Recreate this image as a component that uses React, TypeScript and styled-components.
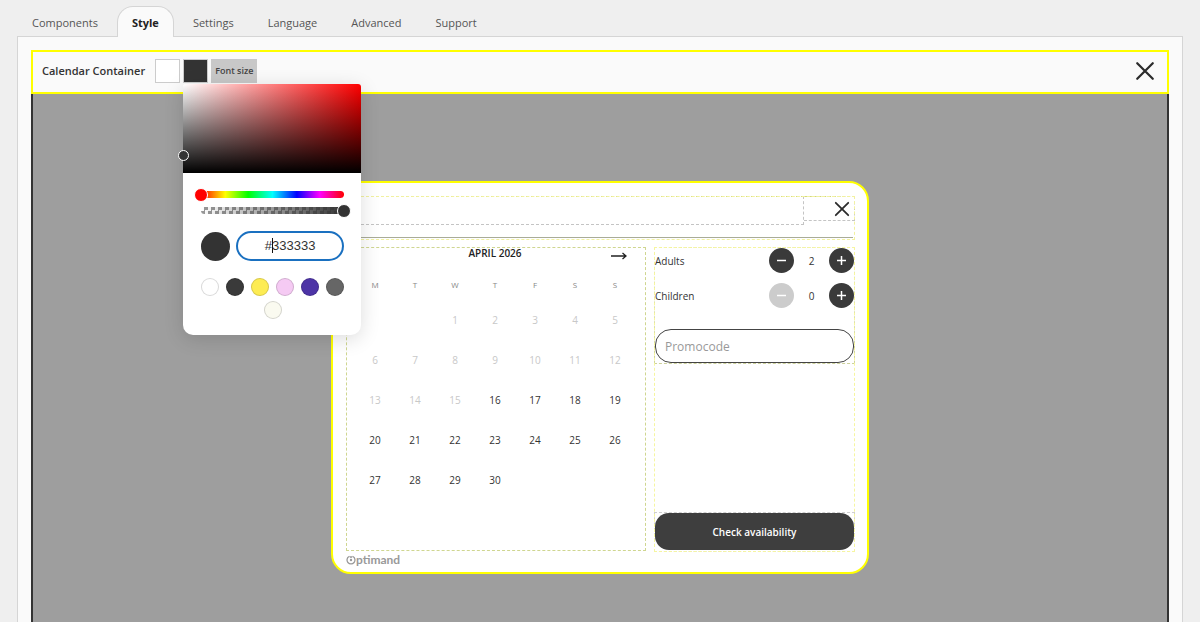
import React from "react";
import styled, { createGlobalStyle, css } from "styled-components";

const GlobalStyle = createGlobalStyle`
  *, *::before, *::after { box-sizing: border-box; }
  body {
    margin: 0;
    background: #efefef;
    color: #333;
    font-family: "Open Sans", "Noto Sans", sans-serif;
    font-size: 11px;
    line-height: 16px;
  }
  button, input { font: inherit; color: inherit; margin: 0; }
  button { padding: 0; border: 0; background: none; cursor: pointer; }
`;

const Page = styled.div`
  display: flex;
  flex-direction: column;
  min-height: 100vh;
  padding: 6px 17px 0;
`;

const Tabs = styled.nav`
  display: flex;
  gap: 4px;
  position: relative;
  z-index: 1;
  margin-bottom: -1px;
`;

const Tab = styled.a<{ $active?: boolean }>`
  height: 31px;
  padding: 8px 14px 0;
  border: 1px solid transparent;
  border-bottom: 0;
  border-radius: 16px 16px 0 0;
  color: #555;
  font-size: 11px;
  text-decoration: none;
  ${(p) =>
    p.$active &&
    css`
      background: #fafafa;
      border-color: #d5d5d5;
      color: #222;
      font-weight: 700;
    `}
`;

const Panel = styled.main`
  flex: 1;
  display: flex;
  flex-direction: column;
  padding: 13px 13px 0;
  border: 1px solid #d5d5d5;
  border-bottom: 0;
  background: #fafafa;
`;

const Toolbar = styled.div`
  display: flex;
  align-items: center;
  height: 44px;
  padding: 0 12px 2px 9px;
  border: 2px solid #ff0;
`;

const ToolbarTitle = styled.h1`
  margin: 0 10px 0 0;
  font-size: 11px;
  font-weight: 600;
`;

const SwatchSlot = styled.div`
  position: relative;
  display: flex;
  margin-right: 3px;
`;

const Swatch = styled.button<{ $color: string }>`
  width: 25px;
  height: 24px;
  border: 1px solid #ccc;
  background: ${(p) => p.$color};
`;

const FontSizeButton = styled.button`
  height: 24px;
  padding: 0 4px;
  background: #c8c8c8;
  color: #444;
  font-size: 9px;
  font-weight: 600;
`;

const IconButton = styled.button`
  display: flex;
  margin-left: auto;
`;

const Stage = styled.section`
  flex: 1;
  padding: 87px 16px 48px;
  border: solid #333;
  border-width: 0 2px;
  background: #9e9e9e;
`;

const Modal = styled.div`
  width: 538px;
  max-width: 100%;
  margin: 0 auto;
  padding: 13px 12px 4px 13px;
  border: 2px solid #ff0;
  border-radius: 20px;
  background: #fff;
`;

const ModalHeader = styled.header`
  display: flex;
  align-items: flex-start;
  height: 44px;
  margin-bottom: 7px;
  outline: 1px dashed #f2f2a0;
  outline-offset: -1px;
  background: linear-gradient(#a9ac98, #a9ac98) 0 41px / 507px 1px no-repeat;
`;

const HeaderTitle = styled.div`
  flex: 1;
  height: 29px;
  border: 1px dashed #c4c4c4;
  border-top-color: #d2d87c;
`;

const HeaderClose = styled.div`
  display: flex;
  align-items: center;
  width: 51px;
  height: 25px;
  padding-right: 4px;
  border: 1px dashed #c4c4c4;
  border-left: 0;
  border-top-color: #d2d87c;
`;

const ModalBody = styled.div`
  display: grid;
  grid-template-columns: 300px 1fr;
  gap: 8px;
`;

const Calendar = styled.section`
  height: 304px;
  padding: 0 10px 0 8px;
  border: 1px dashed #cfd690;
`;

const MonthBar = styled.div`
  display: grid;
  grid-template-columns: 1fr auto 1fr;
  height: 12px;
  margin-bottom: 10px;
  line-height: 10px;
`;

const Month = styled.h2`
  grid-column: 2;
  margin: 0;
  color: #222;
  font-size: 10px;
  font-weight: 600;
`;

const NextButton = styled.button`
  display: flex;
  align-items: flex-end;
  justify-self: end;
  margin-right: 8px;
`;

const Days = styled.table`
  width: 100%;
  table-layout: fixed;
  border-collapse: collapse;
  th {
    height: 30px;
    padding: 0;
    color: #888;
    font-size: 8px;
    font-weight: 400;
  }
  td {
    height: 40px;
    padding: 0;
    text-align: center;
  }
`;

const Day = styled.button`
  width: 32px;
  height: 32px;
  color: #333;
  font-size: 10px;
  font-weight: 500;
  &:disabled {
    color: #c8c8c8;
    font-weight: 400;
  }
`;

const Side = styled.section`
  display: flex;
  flex-direction: column;
  justify-content: space-between;
  height: 305px;
  outline: 1px dashed #f6f6a0;
  outline-offset: -1px;
`;

const Options = styled.div`
  outline: 1px dashed #cdd29c;
  outline-offset: -1px;
  padding: 1px;
`;

const GuestRow = styled.div`
  display: flex;
  align-items: center;
  height: 25px;
  margin-bottom: 10px;
`;

const GuestLabel = styled.span`
  flex: 1;
  font-size: 10px;
`;

const GuestCount = styled.output`
  width: 35px;
  text-align: center;
  font-size: 10px;
`;

const RoundButton = styled.button`
  display: flex;
  align-items: center;
  justify-content: center;
  width: 25px;
  height: 25px;
  border-radius: 50%;
  background: #3a3a3a;
  color: #fff;
  &:disabled {
    background: #ccc;
    color: #fff;
  }
`;

const Promo = styled.input`
  display: block;
  width: 100%;
  height: 34px;
  margin-top: 21px;
  padding: 0 9px;
  border: 1px solid #444;
  border-radius: 16px;
  background: #fff;
  font-size: 12px;
  &::placeholder { color: #999; opacity: 1; }
`;

const SubmitArea = styled.div`
  padding: 1px 1px 2px;
  outline: 1px dashed #cfcfcf;
  outline-offset: -1px;
`;

const Submit = styled.button`
  display: block;
  width: 100%;
  height: 37px;
  border-radius: 14px;
  background: #3e3e3e;
  color: #fff;
  font-size: 10px;
  font-weight: 600;
`;

const Brand = styled.footer`
  display: flex;
  align-items: center;
  height: 16px;
  color: #999;
  font-family: Lato, sans-serif;
  font-size: 12px;
  font-weight: 700;
`;

const Picker = styled.div`
  position: absolute;
  z-index: 5;
  top: 25px;
  left: 0;
  width: 178px;
  border-radius: 3px 3px 10px 10px;
  background: #fff;
  box-shadow: 0 4px 20px rgba(0, 0, 0, 0.14);
`;

const Saturation = styled.div`
  position: relative;
  height: 89px;
  border-radius: 3px 3px 0 0;
  background: linear-gradient(transparent, #000), linear-gradient(to right, #fff, #f00);
`;

const Handle = styled.span`
  position: absolute;
  top: 80%;
  left: 0;
  width: 11px;
  height: 11px;
  margin: -5px;
  border: 1px solid #fff;
  border-radius: 50%;
  background: #333;
`;

const PickerBody = styled.div`
  padding: 18px 17px 16px 18px;
`;

const Track = styled.div<{ $kind: "hue" | "alpha" }>`
  display: flex;
  align-items: center;
  height: 7px;
  margin-bottom: 9px;
  border-radius: 4px;
  background: ${(p) =>
    p.$kind === "hue"
      ? "linear-gradient(to right, #f00, #ff0 17%, #0f0 33%, #0ff 50%, #00f 67%, #f0f 83%, #f00)"
      : "linear-gradient(to right, transparent, #333), repeating-conic-gradient(#999 0 25%, #fff 0 50%) 0 0 / 7px 7px"};
`;

const Range = styled.input<{ $thumb: string }>`
  appearance: none;
  flex: 1;
  min-width: 0;
  height: 13px;
  margin: 0 -7px;
  background: transparent;
  &::-webkit-slider-thumb {
    appearance: none;
    width: 14px;
    height: 14px;
    border: 1px solid #fff;
    border-radius: 50%;
    background: ${(p) => p.$thumb};
  }
`;

const ValueRow = styled.div`
  display: flex;
  align-items: center;
  gap: 6px;
  margin: 17px 0;
`;

const Preview = styled.span`
  width: 29px;
  height: 29px;
  border-radius: 50%;
  background: #333;
`;

const HexField = styled.div`
  position: relative;
  flex: 1;
`;

const HexInput = styled.input`
  display: block;
  width: 100%;
  height: 30px;
  padding: 0 0 2px;
  border: 2px solid #1a70c0;
  border-radius: 15px;
  background: #fff;
  font-family: "Liberation Sans", sans-serif;
  font-size: 13px;
  text-align: center;
  outline: 0;
`;

const Caret = styled.span`
  position: absolute;
  top: 7px;
  left: 36px;
  width: 1px;
  height: 15px;
  background: #111;
`;

const Presets = styled.div`
  display: flex;
  flex-wrap: wrap;
  justify-content: center;
  gap: 5px 7px;
`;

const Preset = styled.button<{ $color: string }>`
  width: 18px;
  height: 18px;
  border: 1px solid rgba(0, 0, 0, 0.15);
  border-radius: 50%;
  background: ${(p) => p.$color};
`;

const tabs = ["Components", "Style", "Settings", "Language", "Advanced", "Support"];
const presets = ["#ffffff", "#3a3a3a", "#fdec53", "#f5caf3", "#4d34a6", "#666666", "#fafaf0"];
const weekdays = ["M", "T", "W", "T", "F", "S", "S"];
const firstOffset = 2;
const firstAvailable = 16;
const weeks = Array.from({ length: 5 }, (_, w) =>
  Array.from({ length: 7 }, (_, d) => {
    const n = w * 7 + d + 1 - firstOffset;
    return n > 0 && n <= 30 ? n : null;
  })
);

function Cross({ size, stroke }: { size: number; stroke: number }) {
  return (
    <svg width={size} height={size} viewBox="0 0 18 18" fill="none" stroke="#2b2b2b" strokeWidth={stroke} strokeLinecap="round">
      <path d="M2 2l14 14M16 2L2 16" />
    </svg>
  );
}

function Sign({ plus }: { plus?: boolean }) {
  return (
    <svg width="13" height="13" viewBox="0 0 13 13" fill="none" stroke="currentColor" strokeWidth="1.5">
      <path d={plus ? "M2 6.500h9M6.500 2v9" : "M2 6.500h9"} />
    </svg>
  );
}

function Guests({ label, count }: { label: string; count: number }) {
  return (
    <GuestRow>
      <GuestLabel>{label}</GuestLabel>
      <RoundButton aria-label={`Fewer ${label}`} disabled={count === 0}>
        <Sign />
      </RoundButton>
      <GuestCount>{count}</GuestCount>
      <RoundButton aria-label={`More ${label}`}>
        <Sign plus />
      </RoundButton>
    </GuestRow>
  );
}

function ColorPicker() {
  return (
    <Picker>
      <Saturation>
        <Handle />
      </Saturation>
      <PickerBody>
        <Track $kind="hue">
          <Range type="range" aria-label="Hue" min={0} max={360} defaultValue={0} $thumb="#f00" />
        </Track>
        <Track $kind="alpha">
          <Range type="range" aria-label="Opacity" min={0} max={100} defaultValue={100} $thumb="#333" />
        </Track>
        <ValueRow>
          <Preview />
          <HexField>
            <HexInput aria-label="Hex color" defaultValue="#333333" />
            <Caret />
          </HexField>
        </ValueRow>
        <Presets>
          {presets.map((c) => (
            <Preset key={c} $color={c} aria-label={c} />
          ))}
        </Presets>
      </PickerBody>
    </Picker>
  );
}

export default function App() {
  return (
    <>
      <GlobalStyle />
      <Page>
        <Tabs>
          {tabs.map((t) => (
            <Tab key={t} href="#" $active={t === "Style"}>
              {t}
            </Tab>
          ))}
        </Tabs>
        <Panel>
          <Toolbar>
            <ToolbarTitle>Calendar Container</ToolbarTitle>
            <SwatchSlot>
              <Swatch $color="#fff" aria-label="Background color" />
            </SwatchSlot>
            <SwatchSlot>
              <Swatch $color="#333" aria-label="Text color" />
              <ColorPicker />
            </SwatchSlot>
            <FontSizeButton>Font size</FontSizeButton>
            <IconButton aria-label="Close toolbar">
              <Cross size={20} stroke={2} />
            </IconButton>
          </Toolbar>
          <Stage>
            <Modal>
              <ModalHeader>
                <HeaderTitle />
                <HeaderClose>
                  <IconButton aria-label="Close calendar">
                    <Cross size={16} stroke={2} />
                  </IconButton>
                </HeaderClose>
              </ModalHeader>
              <ModalBody>
                <Calendar>
                  <MonthBar>
                    <Month>APRIL 2026</Month>
                    <NextButton aria-label="Next month">
                      <svg width="16" height="8" viewBox="0 0 16 8" fill="none" stroke="#222" strokeWidth="1.300">
                        <path d="M0 4h15M11.500 1l3.500 3-3.500 3" />
                      </svg>
                    </NextButton>
                  </MonthBar>
                  <Days>
                    <thead>
                      <tr>
                        {weekdays.map((d, i) => (
                          <th key={i}>{d}</th>
                        ))}
                      </tr>
                    </thead>
                    <tbody>
                      {weeks.map((week, w) => (
                        <tr key={w}>
                          {week.map((n, d) => (
                            <td key={d}>{n && <Day disabled={n < firstAvailable}>{n}</Day>}</td>
                          ))}
                        </tr>
                      ))}
                    </tbody>
                  </Days>
                </Calendar>
                <Side>
                  <Options>
                    <Guests label="Adults" count={2} />
                    <Guests label="Children" count={0} />
                    <Promo placeholder="Promocode" aria-label="Promocode" />
                  </Options>
                  <SubmitArea>
                    <Submit>Check availability</Submit>
                  </SubmitArea>
                </Side>
              </ModalBody>
              <Brand>
                <svg width="10" height="10" viewBox="0 0 10 10" fill="none" stroke="currentColor" strokeWidth="1.300" aria-label="O">
                  <path d="M3 1.500A4 4 0 1 0 7 1.500" />
                  <path d="M3.500 1.300L5 2.500l1.500-1.200" />
                  <circle cx="5" cy="5" r="1.200" fill="currentColor" stroke="none" />
                </svg>
                ptimand
              </Brand>
            </Modal>
          </Stage>
        </Panel>
      </Page>
    </>
  );
}
